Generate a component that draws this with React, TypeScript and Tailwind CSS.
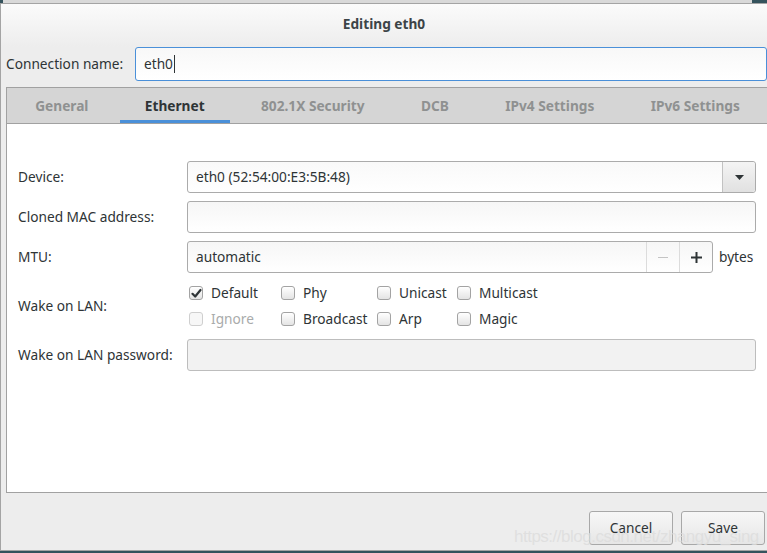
import React from 'react'

const tabs = ['General', 'Ethernet', '802.1X Security', 'DCB', 'IPv4 Settings', 'IPv6 Settings']

function Check({ label, checked = false, disabled = false, w }: { label: string; checked?: boolean; disabled?: boolean; w: string }) {
  return (
    <div className={`flex items-center h-[24px] ${w}`}>
      <span
        className={`w-[14px] h-[14px] rounded-[3px] border flex items-center justify-center shrink-0 ${
          disabled ? 'border-[#cfcfcf] bg-[#f7f7f7]' : 'border-[#a3a3a3] bg-gradient-to-b from-[#ffffff] to-[#e4e4e4]'
        }`}
      >
        {checked && (
          <svg width="11" height="11" viewBox="0 0 11 11">
            <path d="M1.5 5.8 L4.2 8.5 L9.5 2" fill="none" stroke="#2e3436" strokeWidth="2.2" strokeLinecap="round" strokeLinejoin="round" />
          </svg>
        )}
      </span>
      <span className={`ml-[8px] ${disabled ? 'text-[#a9abab]' : 'text-[#2e3436]'}`}>{label}</span>
    </div>
  )
}

function Field({ children, className = '' }: { children?: React.ReactNode; className?: string }) {
  return (
    <div className={`h-[32px] rounded-[3px] border border-[#ababab] bg-gradient-to-b from-[#f6f6f6] to-[#ffffff] flex items-center ${className}`}>
      {children}
    </div>
  )
}

export default function App() {
  return (
    <div className="w-[767px] h-[553px] overflow-hidden bg-[#35535d] font-['Noto_Sans',sans-serif] text-[13.7px] text-[#2e3436] relative">
      <div className="h-[3px] ml-[3px] mr-[15px] bg-[#d9d9d9]" />
      <div className="h-[548px] w-[780px] bg-[#ededed] border-l border-t border-b border-[#a4a4a4] flex flex-col">
        <div className="h-[43px] shrink-0 bg-gradient-to-b from-[#fbfbfb] to-[#ededed] flex items-center justify-center pr-[13px] pb-[3px]">
          <span className="font-bold text-[#3c4447]">Editing eth0</span>
        </div>

        <div className="flex items-center pl-[5px] h-[34px] shrink-0">
          <span className="w-[129px]">Connection name:</span>
          <div className="w-[632px] h-[34px] rounded-[3px] border border-[#4a90d9] bg-gradient-to-b from-[#f8f8f8] to-white flex items-center pl-[8px]">
            <span>eth0</span>
            <span className="w-px h-[18px] bg-[#2e3436] ml-px" />
          </div>
        </div>

        <div className="mt-[6px] ml-[5px] w-[770px] h-[406px] shrink-0 border border-[#a1a1a1] bg-white flex flex-col">
          <div className="h-[36px] shrink-0 bg-[#d5d5d5] border-b border-[#a1a1a1] flex w-[761px]">
            {tabs.map(t => (
              <div key={t} className="flex-auto flex flex-col">
                <div className={`flex-1 flex items-center justify-center pt-[4px] font-bold ${t === 'Ethernet' ? 'text-[#2e3436]' : 'text-[#8f9191]'}`}>
                  {t}
                </div>
                <div className={`h-[3px] mx-[3px] ${t === 'Ethernet' ? 'bg-[#4a90d9]' : ''}`} />
              </div>
            ))}
          </div>

          <div className="pt-[37px] pl-[11px] w-[749px] flex flex-col gap-[8px]">
            <div className="flex items-center">
              <span className="w-[169px]">Device:</span>
              <Field className="flex-1 bg-gradient-to-b from-[#f9f9f9] to-[#f1f1f1]">
                <span className="flex-1 pl-[8px]">eth0 (52:54:00:E3:5B:48)</span>
                <div className="w-[33px] h-full border-l border-[#c2c2c2] rounded-r-[3px] bg-gradient-to-b from-[#f4f4f4] to-[#e1e1e1] flex items-center justify-center">
                  <svg width="9" height="5" viewBox="0 0 9 5"><path d="M0 0 H9 L4.5 5 Z" fill="#2e3436" /></svg>
                </div>
              </Field>
            </div>

            <div className="flex items-center">
              <span className="w-[169px]">Cloned MAC address:</span>
              <Field className="flex-1" />
            </div>

            <div className="flex items-center">
              <span className="w-[169px]">MTU:</span>
              <Field className="w-[526px]">
                <span className="flex-1 pl-[8px]">automatic</span>
                <div className="w-[33px] h-full border-l border-[#dcdcdc] flex items-center justify-center">
                  <span className="w-[10px] h-px bg-[#c4c4c4]" />
                </div>
                <div className="w-[33px] h-full border-l border-[#dcdcdc] flex items-center justify-center">
                  <svg width="11" height="11" viewBox="0 0 11 11"><path d="M5.5 0 V11 M0 5.5 H11" stroke="#2e3436" strokeWidth="2" /></svg>
                </div>
              </Field>
              <span className="ml-[6px]">bytes</span>
            </div>

            <div className="flex items-center">
              <span className="w-[169px]">Wake on LAN:</span>
              <div className="flex flex-col gap-[2px] pl-[2px]">
                <div className="flex">
                  <Check label="Default" checked w="w-[92px]" />
                  <Check label="Phy" w="w-[96px]" />
                  <Check label="Unicast" w="w-[80px]" />
                  <Check label="Multicast" w="w-[100px]" />
                </div>
                <div className="flex">
                  <Check label="Ignore" disabled w="w-[92px]" />
                  <Check label="Broadcast" w="w-[96px]" />
                  <Check label="Arp" w="w-[80px]" />
                  <Check label="Magic" w="w-[100px]" />
                </div>
              </div>
            </div>

            <div className="flex items-center">
              <span className="w-[169px]">Wake on LAN password:</span>
              <div className="flex-1 h-[32px] rounded-[3px] border border-[#bdbdbd] bg-[#f2f2f2]" />
            </div>
          </div>
        </div>

        <div className="flex-1 flex items-end pb-[5px] gap-[8px] pl-[588px]">
          <button className="w-[84px] h-[34px] rounded-[3px] border border-[#a8a8a8] bg-gradient-to-b from-[#f7f7f7] to-[#e6e6e6] text-[#2e3436]">Cancel</button>
          <button className="w-[84px] h-[34px] rounded-[3px] border border-[#a8a8a8] bg-gradient-to-b from-[#f7f7f7] to-[#e6e6e6] text-[#2e3436]">Save</button>
        </div>
      </div>
      <div className="absolute left-[514px] top-[524px] text-[17px] tracking-[-0.5px] font-['Liberation_Sans_Narrow','Liberation_Sans',sans-serif] text-[#dcdcdc]/80 pointer-events-none">
        https://blog.csdn.net/zhangyu_sing
      </div>
    </div>
  )
}
